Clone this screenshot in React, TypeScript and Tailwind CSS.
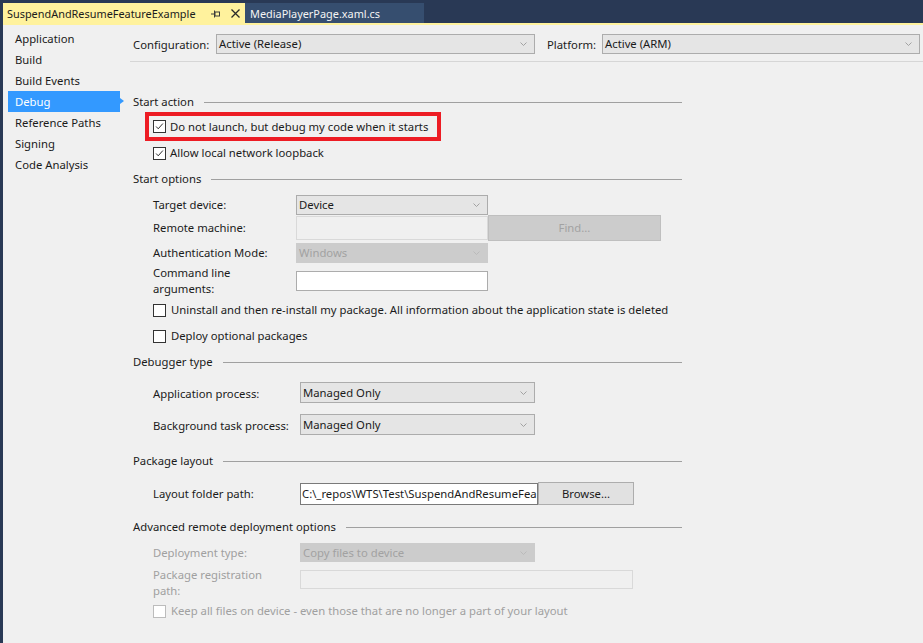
import React from "react";

const CheckMark = () => (
  <svg width="13" height="13" viewBox="0 0 13 13" className="block">
    <path d="M2.5 6.5 L5 9.2 L10.5 3" fill="none" stroke="#1e1e1e" strokeWidth="1.1" />
  </svg>
);

function Checkbox({ checked, disabled }: { checked?: boolean; disabled?: boolean }) {
  return (
    <div
      className={`w-[13px] h-[13px] shrink-0 border bg-white ${
        disabled ? "border-[#bcbcbc]" : "border-[#333333]"
      } flex items-center justify-center`}
    >
      {checked ? <CheckMark /> : null}
    </div>
  );
}

const Chevron = ({ color }: { color: string }) => (
  <svg width="7" height="4" viewBox="0 0 7 4" className="block">
    <path d="M0.5 0.5 L3.5 3.5 L6.5 0.5" fill="none" stroke={color} strokeWidth="0.9" />
  </svg>
);

function Select({ value, w, disabled }: { value: string; w: string; disabled?: boolean }) {
  return (
    <div
      className={`${w} h-full shrink-0 flex items-center justify-between border pl-[2px] pr-[7px] ${
        disabled ? "bg-[#cccccc] border-[#cccccc] text-[#a2a2a2]" : "bg-[#e5e5e5] border-[#acacac] text-[#1b1b1b]"
      }`}
    >
      <span className="whitespace-nowrap">{value}</span>
      <Chevron color={disabled ? "#b8b8b8" : "#9a9a9a"} />
    </div>
  );
}

function Header({ title, className }: { title: string; className: string }) {
  return (
    <div className={`flex items-center h-[20px] pl-[3px] ${className}`}>
      <span className="whitespace-nowrap">{title}</span>
      <div className="flex-1 h-px bg-[#a0a0a0] ml-[10px]" />
    </div>
  );
}

export default function App() {
  const sidebar = ["Application", "Build", "Build Events", "Debug", "Reference Paths", "Signing", "Code Analysis"];
  return (
    <div className="w-[923px] h-[643px] overflow-hidden bg-[#293955] pl-[3px] flex flex-col font-['Noto_Sans',sans-serif] text-[11.3px] text-[#1b1b1b] leading-[16px]">
      {/* Tab bar */}
      <div className="h-[23px] pt-[3px] flex shrink-0 text-[10.9px]">
        <div className="w-[242px] h-full bg-[#fff29d] flex items-center pl-[4px] text-[#1b1b1b]">
          <span className="whitespace-nowrap pt-[1px]">SuspendAndResumeFeatureExample</span>
          <div className="ml-auto flex items-center gap-[11px] pr-[5px] pt-[1px]">
            <svg width="9" height="8" viewBox="0 0 9 8" className="block">
              <path d="M0 4 H3" stroke="#3a3a3a" strokeWidth="1" />
              <path d="M3.5 0.5 V7.5" stroke="#3a3a3a" strokeWidth="1" />
              <rect x="4" y="2" width="4.5" height="4" fill="none" stroke="#3a3a3a" strokeWidth="1" />
            </svg>
            <svg width="9" height="9" viewBox="0 0 9 9" className="block">
              <path d="M0.5 0.5 L8.5 8.5 M8.5 0.5 L0.5 8.5" stroke="#2a2a2a" strokeWidth="1.3" />
            </svg>
          </div>
        </div>
        <div className="w-[179px] h-full bg-[#364e6f] flex items-center pl-[5px] text-[#f4f4f4]">
          <span className="whitespace-nowrap pt-[1px]">MediaPlayerPage.xaml.cs</span>
        </div>
      </div>
      <div className="h-[2px] bg-[#fff29d] shrink-0" />

      {/* Body */}
      <div className="flex-1 flex bg-[#f0f0f0]">
        {/* Sidebar */}
        <div className="w-[127px] shrink-0 pt-[3px] pl-[5px] flex flex-col">
          {sidebar.map((s) => (
            <div
              key={s}
              className={`relative w-[112px] h-[21px] flex items-center pl-[7px] pt-[1px] ${
                s === "Debug" ? "bg-[#3399ff] text-white" : ""
              }`}
            >
              {s}
              {s === "Debug" ? (
                <div className="absolute right-[-4px] top-[7px] w-0 h-0 border-y-[3px] border-y-transparent border-l-[4px] border-l-[#3399ff]" />
              ) : null}
            </div>
          ))}
        </div>

        {/* Main */}
        <div className="flex-1 flex flex-col">
          <div className="pt-[9px] pl-[3px] pr-[3px]">
            <div className="h-[20px] flex items-center">
              <span className="w-[83px] shrink-0 pt-[1px]">Configuration:</span>
              <Select value="Active (Release)" w="w-[319px]" />
              <span className="w-[55px] ml-[12px] shrink-0 pt-[1px]">Platform:</span>
              <div className="flex-1 h-full">
                <Select value="Active (ARM)" w="w-full" />
              </div>
            </div>
          </div>
          <div className="mt-[7px] h-px bg-[#d6d6d6]" />

          <div className="w-[552px] flex flex-col">
            <Header title="Start action" className="mt-[30px]" />
            <div className="h-[29px] w-[296px] ml-[15px] border-[4px] border-[#ed1c24] flex items-center pl-[4px]">
              <Checkbox checked />
              <span className="ml-[4px] whitespace-nowrap">Do not launch, but debug my code when it starts</span>
            </div>
            <div className="mt-[2px] h-[20px] flex items-center pl-[23px]">
              <Checkbox checked />
              <span className="ml-[4px] whitespace-nowrap">Allow local network loopback</span>
            </div>

            <Header title="Start options" className="mt-[6px]" />
            <div className="mt-[6px] h-[20px] flex items-center pl-[23px]">
              <span className="w-[143px] shrink-0">Target device:</span>
              <Select value="Device" w="w-[192px]" />
            </div>
            <div className="h-[26px] flex items-center pl-[23px]">
              <span className="w-[143px] shrink-0">Remote machine:</span>
              <div className="w-[192px] h-[24px] shrink-0 bg-[#f0f0f0] border border-[#d9d9d9]" />
              <div className="w-[173px] h-[26px] shrink-0 bg-[#cccccc] border border-[#bfbfbf] flex items-center justify-center text-[#a2a2a2]">
                Find...
              </div>
            </div>
            <div className="mt-[2px] h-[20px] flex items-center pl-[23px]">
              <span className="w-[143px] shrink-0">Authentication Mode:</span>
              <Select value="Windows" w="w-[192px]" disabled />
            </div>
            <div className="mt-[2px] h-[32px] flex items-center pl-[23px]">
              <span className="w-[143px] shrink-0">
                Command line
                <br />
                arguments:
              </span>
              <div className="w-[192px] h-[20px] shrink-0 bg-white border border-[#acacac]" />
            </div>
            <div className="mt-[3px] h-[20px] flex items-center pl-[23px]">
              <Checkbox />
              <span className="ml-[5px] whitespace-nowrap">
                Uninstall and then re-install my package. All information about the application state is deleted
              </span>
            </div>
            <div className="mt-[6px] h-[20px] flex items-center pl-[23px]">
              <Checkbox />
              <span className="ml-[5px] whitespace-nowrap">Deploy optional packages</span>
            </div>

            <Header title="Debugger type" className="mt-[6px]" />
            <div className="mt-[10px] h-[21px] flex items-center pl-[23px]">
              <span className="w-[147px] shrink-0 pt-[3px]">Application process:</span>
              <Select value="Managed Only" w="w-[235px]" />
            </div>
            <div className="mt-[11px] h-[21px] flex items-center pl-[23px]">
              <span className="w-[147px] shrink-0 pt-[3px]">Background task process:</span>
              <Select value="Managed Only" w="w-[235px]" />
            </div>

            <Header title="Package layout" className="mt-[16px]" />
            <div className="mt-[11px] h-[23px] flex items-center pl-[23px]">
              <span className="w-[147px] shrink-0">Layout folder path:</span>
              <div className="w-[238px] h-[22px] shrink-0 bg-white border border-[#7a7a7a] flex items-center pl-[1px] overflow-hidden">
                <span className="whitespace-nowrap">C:\_repos\WTS\Test\SuspendAndResumeFea</span>
              </div>
              <div className="w-[96px] h-[23px] shrink-0 bg-[#e1e1e1] border border-[#adadad] flex items-center justify-center">
                Browse...
              </div>
            </div>

            <Header title="Advanced remote deployment options" className="mt-[12px]" />
            <div className="mt-[6px] h-[19px] flex items-center pl-[23px] text-[#a0a0a0]">
              <span className="w-[147px] shrink-0">Deployment type:</span>
              <Select value="Copy files to device" w="w-[235px]" disabled />
            </div>
            <div className="mt-[5px] h-[32px] flex items-start pl-[23px] text-[#a0a0a0]">
              <span className="w-[147px] shrink-0">
                Package registration
                <br />
                path:
              </span>
              <div className="mt-[3px] w-[333px] h-[19px] shrink-0 bg-[#f0f0f0] border border-[#d9d9d9]" />
            </div>
            <div className="mt-[2px] h-[20px] flex items-center pl-[23px] text-[#a0a0a0]">
              <Checkbox disabled />
              <span className="ml-[5px] whitespace-nowrap">
                Keep all files on device - even those that are no longer a part of your layout
              </span>
            </div>
          </div>
        </div>
      </div>
    </div>
  );
}
